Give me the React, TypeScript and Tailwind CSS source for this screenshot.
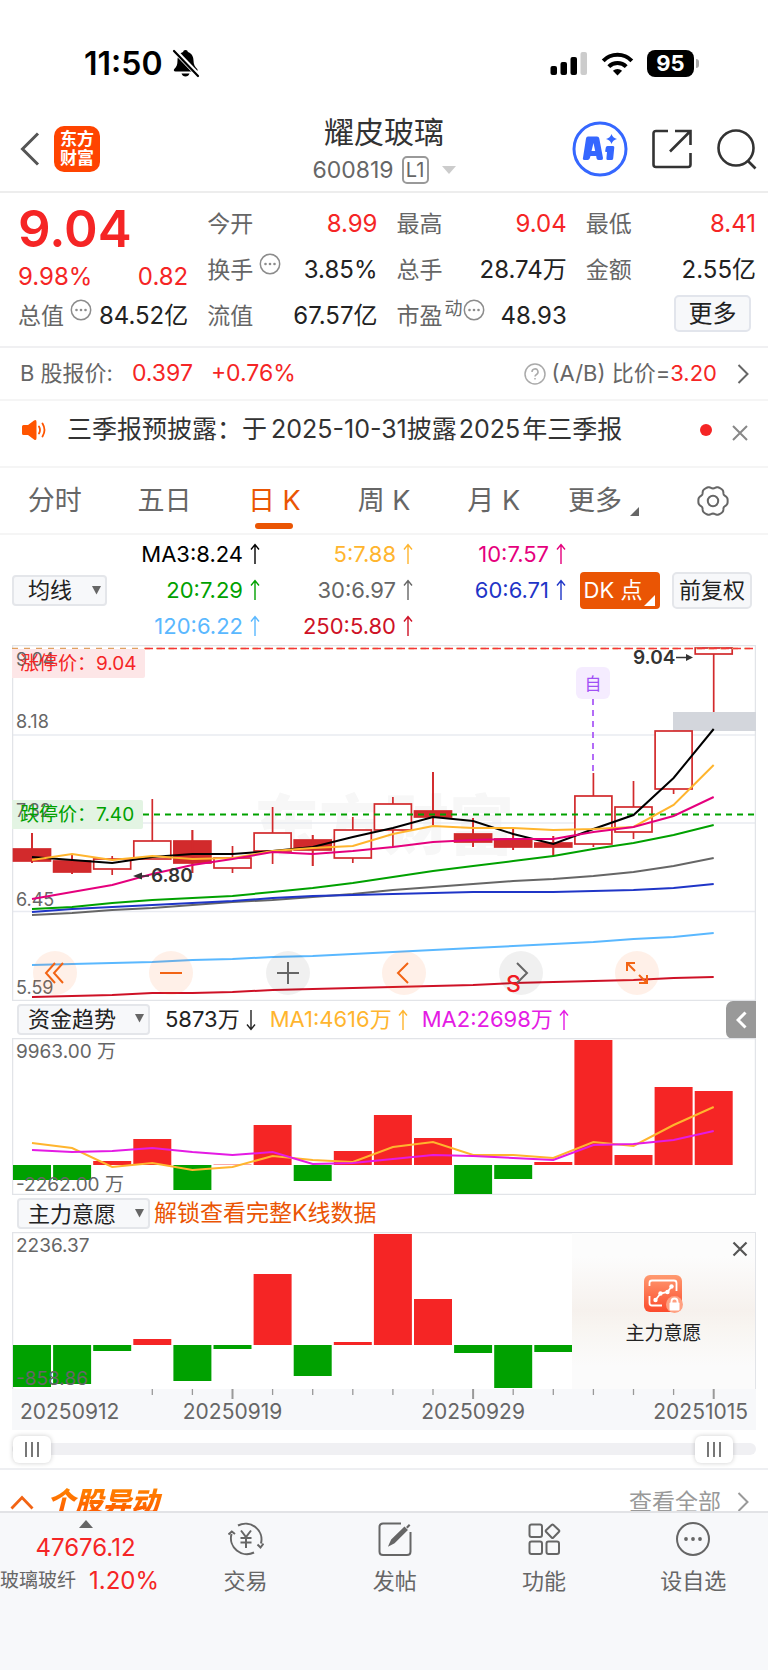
import { useState } from 'react';
import type { ReactNode } from 'react';

const STEP = 40.1;
const cx = (i: number) => 20 + i * STEP;

// high, body top, body bottom, low, filled
const candles: [number, number, number, number, boolean][] = [
  [188, 204, 216, 218, true],
  [210, 216, 227, 229, true],
  [211, 214, 224, 230, false],
  [154, 196, 214, 214, false],
  [185, 196, 218, 228, true],
  [201, 213, 223, 228, false],
  [162, 188, 206, 219, false],
  [190, 195, 205, 221, true],
  [172, 185, 213, 218, false],
  [152, 159, 185, 202, false],
  [127, 166, 172, 180, true],
  [173, 189, 197, 202, true],
  [183, 194, 202, 205, true],
  [191, 198, 202, 211, true],
  [128, 151, 199, 202, false],
  [136, 162, 187, 194, false],
  [86, 86, 144, 149, false],
  [3, 3, 9, 67, false],
];

const maLines = [
  { color: '#ce1126', ys: [352, 351, 350, 348, 348, 347, 345, 344, 343, 342, 341, 340, 338, 337, 336, 335, 333, 332] },
  { color: '#5ab8ff', ys: [320, 319, 318, 317, 315, 314, 312, 311, 309, 307, 305, 303, 301, 299, 297, 294, 292, 288] },
  { color: '#666666', ys: [270, 268, 265, 263, 260, 257, 255, 252, 249, 245, 242, 239, 236, 234, 231, 227, 221, 213] },
  { color: '#1f35c7', ys: [267, 264, 262, 260, 258, 256, 253, 251, 250, 249, 248, 247, 247, 247, 246, 245, 243, 239] },
  { color: '#00a100', ys: [264, 262, 258, 255, 253, 251, 247, 243, 238, 232, 226, 221, 216, 211, 204, 198, 190, 180] },
  { color: '#000000', ys: [212, 215, 218, 212, 209, 209, 206, 202, 192, 183, 172, 176, 189, 199, 184, 170, 133, 84] },
  { color: '#ffb52e', ys: [215, 209, 215, 211, 214, 213, 206, 203, 201, 189, 181, 183, 183, 185, 184, 182, 160, 120] },
  { color: '#e5007d', ys: [254, 247, 240, 229, 220, 214, 207, 209, 206, 202, 197, 195, 194, 194, 187, 182, 171, 152] },
];

const fundBars = [-15, -15, 4, 26, -25, 1, 40, -16, 14, 50, 27, -29, -14, 3, 125, 10, 78, 74];
const fundMa1 = [105, 110, 129, 125, 132, 129, 118, 122, 124, 109, 104, 117, 117, 120, 104, 108, 87, 69];
const fundMa2 = [112, 114, 113, 110, 114, 117, 114, 126, 125, 121, 117, 118, 120, 122, 107, 106, 102, 93];
const willBars = [-42, -39, -6, 6, -36, -4, 71, -31, 3, 111, 46, -8, -43, -7];

const maValues = [
  { label: 'MA3:8.24', cls: 'text-black' },
  { label: '5:7.88', cls: 'text-[#ffb52e]' },
  { label: '10:7.57', cls: 'text-[#e5007d]' },
  { label: '20:7.29', cls: 'text-[#00a100]' },
  { label: '30:6.97', cls: 'text-[#666]' },
  { label: '60:6.71', cls: 'text-[#1f35c7]' },
  { label: '120:6.22', cls: 'text-[#5ab8ff]' },
  { label: '250:5.80', cls: 'text-[#ce1126]' },
];

const toPoints = (ys: number[]) => ys.map((y, i) => `${cx(i)},${y}`).join(' ');

const gearPath =
  'M' +
  Array.from({ length: 72 }, (_, i) => {
    const a = (i * 5 * Math.PI) / 180;
    const r = 13.9 + 1.1 * Math.cos(6 * a) - 0.35 * Math.cos(12 * a);
    return `${(17 + r * Math.cos(a)).toFixed(2)} ${(17 + r * Math.sin(a)).toFixed(2)}`;
  }).join('L') +
  'Z';

function Arrow({ down = false }: { down?: boolean }) {
  return (
    <svg width="10" height="22" viewBox="0 0 10 22" fill="none" stroke="currentColor" strokeWidth="1.4" className={down ? 'rotate-180' : ''}>
      <path d="M5 21V2M1 6.5L5 1.5L9 6.5" />
    </svg>
  );
}

function Chevron({ className }: { className: string }) {
  return (
    <svg viewBox="0 0 12 20" fill="none" stroke="currentColor" strokeWidth="2" className={className}>
      <path d="M1.5 1L10.5 10L1.5 19" />
    </svg>
  );
}

function InfoDots() {
  return (
    <svg width="22" height="22" viewBox="0 0 22 22" className="mb-3 shrink-0" fill="#8c8c8c">
      <circle cx="11" cy="11" r="9.7" fill="none" stroke="#8c8c8c" strokeWidth="1.5" />
      <circle cx="6.5" cy="11" r="1.3" />
      <circle cx="11" cy="11" r="1.3" />
      <circle cx="15.5" cy="11" r="1.3" />
    </svg>
  );
}

function Picker({ label, options, className }: { label: string; options: string[]; className: string }) {
  return (
    <div className={`relative shrink-0 ${className}`}>
      <select
        aria-label={label}
        className="h-[31px] w-full appearance-none rounded-[4px] border-2 border-[#e4e6ea] bg-[#f7f8fa] text-[22px] leading-[26px] text-[#222] outline-none"
      >
        {options.map((o) => (
          <option key={o}>{o}</option>
        ))}
      </select>
      <svg width="9" height="9" viewBox="0 0 9 9" className="pointer-events-none absolute right-[6px] top-[11px]">
        <path d="M0 0H9L4.5 8.5Z" fill="#666" />
      </svg>
    </div>
  );
}

function Cell({ name, extra, value, red = false }: { name: string; extra?: ReactNode; value: string; red?: boolean }) {
  return (
    <div className="flex h-[46px] items-center justify-between whitespace-nowrap text-[24px]">
      <span className="flex items-center text-[23px] text-[#666]">
        {name}
        {extra}
      </span>
      <span className={red ? 'text-[#f52525]' : 'text-[#222]'}>{value}</span>
    </div>
  );
}

function StatusBar() {
  return (
    <div className="flex h-[105px] items-start justify-between pl-[84px] pr-[69px] pt-[45px]">
      <div className="flex h-[37px] items-center gap-[9px] text-[32px] font-semibold text-black">
        11:50
        <svg width="28" height="29" viewBox="0 0 28 29">
          <path d="M13.5 1c-1.400 0-2.200.9-2.400 2.100C7.600 4.300 5.500 7.200 5.500 11.500c0 4.200-1 6.500-3 8.300-1.300 1.200-.7 2.700 1 2.700h20.500c1.600 0 2.200-1.500 1-2.700-2-1.800-3.500-4.100-3.500-8.300 0-4.300-2.200-7.200-5.600-8.400-.2-1.200-1-2.100-2.400-2.100z" />
          <path d="M9.500 24.500h8c-.6 2-2.100 3-4 3s-3.400-1-4-3z" />
          <path d="M2 1L27 27" stroke="#fff" strokeWidth="5" />
          <path d="M2 2L26 27" stroke="#000" strokeWidth="2.200" strokeLinecap="round" />
        </svg>
      </div>
      <div className="flex h-[37px] items-center gap-[13px]">
        <svg width="38" height="25" viewBox="0 0 38 25">
          <rect x="0.500" y="15" width="6.500" height="9" rx="2" />
          <rect x="10.500" y="11" width="6.500" height="13" rx="2" />
          <rect x="20.500" y="6" width="6.500" height="18" rx="2" />
          <rect x="30.500" y="1" width="6.500" height="23" rx="2" fill="#ccc" />
        </svg>
        <svg width="33" height="24" viewBox="0 0 33 24" fill="none" stroke="#000" strokeWidth="4">
          <path d="M2.200 8.800a20 20 0 0 1 28.600 0" />
          <path d="M7.800 14.600a12.300 12.300 0 0 1 17.400 0" />
          <path d="M16.500 23.500l-4.600-4.700a6.500 6.500 0 0 1 9.200 0z" fill="#000" stroke="none" />
        </svg>
        <div className="flex items-center gap-[2px]">
          <span className="flex h-[27px] w-[47px] items-center justify-center rounded-[8px] bg-black text-[22px] font-bold text-white">95</span>
          <span className="h-[9px] w-[3px] rounded-r-full bg-[#aaa]"></span>
        </div>
      </div>
    </div>
  );
}

function Header() {
  return (
    <header className="flex h-[88px] items-center border-b-2 border-[#ededed] pl-[20px] pr-[10px]">
      <div className="flex flex-1 items-center gap-[14px] pt-[2px]">
        <button aria-label="返回" className="text-[#555]">
          <svg width="20" height="34" viewBox="0 0 20 34" fill="none" stroke="currentColor" strokeWidth="3">
            <path d="M18 1.500L2.500 17L18 32.500" />
          </svg>
        </button>
        <div className="flex h-[46px] w-[46px] flex-col items-center justify-center rounded-[10px] bg-[#ff4400] text-[17px] font-bold leading-[19px] text-white">
          <span>东方</span>
          <span>财富</span>
        </div>
      </div>
      <div className="mr-[10px] flex flex-col items-center">
        <h1 className="text-[30px] leading-[40px] text-[#333]">耀皮玻璃</h1>
        <button className="mt-[3px] flex items-center gap-2 text-[23px] leading-[30px] text-[#666]">
          600819
          <span className="flex h-[28px] w-[27px] items-center justify-center rounded-[5px] border-2 border-[#999] text-[20px] leading-none">L1</span>
          <svg width="14" height="8" viewBox="0 0 14 8" className="ml-[5px]">
            <path d="M0 0H14L7 8Z" fill="#ccc" />
          </svg>
        </button>
      </div>
      <div className="flex flex-1 items-center justify-end gap-[24px] pt-[2px]">
        <button aria-label="Ai">
          <svg width="56" height="56" viewBox="0 0 56 56">
            <circle cx="28" cy="28" r="26" fill="#fff" stroke="#3567ff" strokeWidth="3" />
            <path
              d="M16 15.500H25Q27 15.500 27.300 17.500L31 37Q31.300 39 29.300 39H26.500Q24.800 39 24.500 37.300L24.200 35H18.500L17.800 37.300Q17.300 39 15.500 39H12.500Q10.300 39 11 36.800L14 17.500Q14.300 15.500 16 15.500ZM21.500 22L19.500 30H23.200Z"
              fill="#3567ff"
              fillRule="evenodd"
            />
            <path d="M35.500 25H41Q42.500 25 42.300 26.500L41.200 37.500Q41 39 39.500 39H35.800Q34.300 39 34.400 37.500L35 31H34Q33 31 33.200 30L33.800 26.500Q34 25 35.500 25Z" fill="#3567ff" />
            <path d="M39.500 13Q40.700 17 45 18Q40.700 19 39.500 23Q38.300 19 34 18Q38.300 17 39.500 13Z" fill="#3567ff" />
          </svg>
        </button>
        <button aria-label="分享">
          <svg width="40" height="40" viewBox="0 0 40 40" fill="none" stroke="#333" strokeWidth="2.600">
            <path d="M16 2H4Q1.500 2 1.500 4.500V35.500Q1.500 38 4 38H36Q38.500 38 38.500 35.500V24" />
            <path d="M23 2H38.500V16M38 2.500L18 22.500" />
          </svg>
        </button>
        <button aria-label="搜索">
          <svg width="42" height="42" viewBox="0 0 42 42" fill="none" stroke="#333" strokeWidth="2.600">
            <circle cx="20" cy="20" r="17.500" />
            <path d="M31.500 32.500L39.500 40.500" />
          </svg>
        </button>
      </div>
    </header>
  );
}

function Quote() {
  return (
    <section className="grid grid-cols-4 gap-x-[19px] border-b-2 border-[#f0f0f2] pb-[7px] pl-[18px] pr-[12px] pt-2">
      <div className="text-[#f52525]">
        <div className="flex h-[55px] items-center text-[51px] font-semibold leading-none">9.04</div>
        <div className="flex h-[37px] items-center justify-between pt-[4px] text-[24px]">
          <span>9.98%</span>
          <span>0.82</span>
        </div>
        <Cell name="总值" extra={<span className="ml-[6px]"><InfoDots /></span>} value="84.52亿" />
      </div>
      <div>
        <Cell name="今开" value="8.99" red />
        <Cell name="换手" extra={<span className="ml-[6px]"><InfoDots /></span>} value="3.85%" />
        <Cell name="流值" value="67.57亿" />
      </div>
      <div>
        <Cell name="最高" value="9.04" red />
        <Cell name="总手" value="28.74万" />
        <Cell
          name="市盈"
          extra={
            <>
              <span className="mb-4 ml-[2px] text-[18px]">动</span>
              <span><InfoDots /></span>
            </>
          }
          value="48.93"
        />
      </div>
      <div>
        <Cell name="最低" value="8.41" red />
        <Cell name="金额" value="2.55亿" />
        <div className="flex justify-end pr-[5px] pt-[2px]">
          <button className="h-[37px] w-[77px] rounded-[5px] border-2 border-[#e2e5ec] bg-[#f7f8fa] text-[24px] leading-none text-[#222]">更多</button>
        </div>
      </div>
    </section>
  );
}

function Notices() {
  return (
    <>
      <div className="flex h-[53px] items-center border-b-2 border-[#f5f5f5] pl-[20px] pr-[19px] text-[22px] text-[#666]">
        <span>B 股报价:</span>
        <span className="ml-[19px] text-[23px] text-[#f52525]">0.397</span>
        <span className="ml-[18px] text-[23px] text-[#f52525]">+0.76%</span>
        <a href="#ratio" className="ml-auto flex items-center">
          <svg width="22" height="22" viewBox="0 0 22 22" fill="none" stroke="#aaa" strokeWidth="1.500" className="mr-[6px]">
            <circle cx="11" cy="11" r="10" />
            <path d="M8 9a3 3 0 1 1 4.500 2.500Q11 12.300 11 13.500M11 15v1.600" />
          </svg>
          (A/B) 比价=<span className="text-[#f52525]">3.20</span>
          <Chevron className="ml-5 h-[20px] w-[12px]" />
        </a>
      </div>
      <div className="flex h-[67px] items-center border-b-2 border-[#f5f5f5] pb-[8px] pl-[21px] pr-[20px]">
        <svg width="26" height="22" viewBox="0 0 26 22">
          <path d="M2.500 6H7L13 1.500Q15.500 0 15.500 3V19Q15.500 22 13 20.500L7 16H2.500Q1 16 1 14.500V7.500Q1 6 2.500 6Z" fill="#ff5500" />
          <path d="M18 7.500Q20 11 18 14.500M21.500 4.500Q25.500 11 21.500 17.500" fill="none" stroke="#ff5500" strokeWidth="1.800" strokeLinecap="round" />
        </svg>
        <a href="#notice" className="ml-[20px] whitespace-nowrap text-[25px] text-[#333]">
          三季报预披露：于<span className="ml-1">2025-10-31</span>披露<span className="mx-[2px]">2025</span>年三季报
        </a>
        <span className="ml-auto h-[12px] w-[12px] rounded-full bg-[#f52525]"></span>
        <button aria-label="关闭" className="ml-5 mt-[6px] text-[#888]">
          <svg width="16" height="16" viewBox="0 0 16 16" fill="none" stroke="currentColor" strokeWidth="2">
            <path d="M1 1L15 15M15 1L1 15" />
          </svg>
        </button>
      </div>
    </>
  );
}

function Tabs() {
  const [active, setActive] = useState('日 K');
  return (
    <nav className="grid h-[67px] grid-cols-7 border-b-2 border-[#f5f5f5] text-[27px]">
      {['分时', '五日', '日 K', '周 K', '月 K', '更多'].map((t) => (
        <button
          key={t}
          onClick={() => setActive(t)}
          className={`flex flex-col items-center pt-[14px] ${active === t ? 'text-[#ea5504]' : 'text-[#666]'}`}
        >
          <span className="flex items-end gap-2 whitespace-nowrap leading-[38px]">
            {t}
            {t === '更多' && (
              <svg width="9" height="9" viewBox="0 0 9 9" className="mb-1">
                <path d="M9 0V9H0Z" fill="#666" />
              </svg>
            )}
          </span>
          {active === t && <span className="mt-[3px] h-[6px] w-[38px] rounded-[3px] bg-[#ea5504]"></span>}
        </button>
      ))}
      <button aria-label="设置" className="flex justify-center pt-[16px]">
        <svg width="34" height="34" viewBox="0 0 34 34" fill="none" stroke="#666" strokeWidth="2">
          <path d={gearPath} />
          <circle cx="17" cy="17" r="5.200" />
        </svg>
      </button>
    </nav>
  );
}

function MaRow() {
  return (
    <div className="flex h-[110px] items-center pl-[12px] pr-[16px]">
      <Picker label="指标" options={['均线', 'BOLL']} className="w-[95px] [&>select]:pl-[14px]" />
      <div className="grid flex-1 grid-cols-3">
        {maValues.map((m) => (
          <span key={m.label} className={`flex h-[36px] items-center justify-end gap-[7px] whitespace-nowrap text-[22px] ${m.cls}`}>
            {m.label}
            <Arrow />
          </span>
        ))}
      </div>
      <button className="relative ml-[14px] h-[37px] w-[80px] whitespace-nowrap rounded-[4px] bg-[#ea5504] pr-[14px] text-[22px] leading-none text-white">
        DK 点
        <svg width="11" height="11" viewBox="0 0 11 11" className="absolute bottom-[3px] right-[5px]">
          <path d="M11 0V11H0Z" fill="#fff" />
        </svg>
      </button>
      <button className="ml-[12px] h-[37px] w-[80px] whitespace-nowrap rounded-[5px] border-2 border-[#e4e6ea] bg-[#f7f8fa] text-[22px] leading-none text-[#222]">前复权</button>
    </div>
  );
}

function ControlButton({ label, gray = false, children }: { label: string; gray?: boolean; children: ReactNode }) {
  return (
    <button
      aria-label={label}
      className={`flex h-[44px] w-[44px] items-center justify-center rounded-full ${gray ? 'bg-black/6 text-[#666]' : 'bg-[#ff6a1f]/10 text-[#f26414]'}`}
    >
      <svg width="24" height="24" viewBox="0 0 24 24" fill="none" stroke="currentColor" strokeWidth="2">
        {children}
      </svg>
    </button>
  );
}

function KLine() {
  return (
    <div className="relative mx-[12px]">
      <svg viewBox="0 0 744 356" className="block w-full" fontSize="18">
        <text x="372" y="204" textAnchor="middle" fontSize="65" fontWeight="900" fill="#f7f7f7">东方财富</text>
        <path d="M0 90H744M0 178H744M0 266.500H744" stroke="#e9ebf1" strokeWidth="1.500" />
        <rect x="0.500" y="0.500" width="743" height="355" fill="none" stroke="#e2e4e8" strokeWidth="1.500" />
        <rect x="661" y="67" width="83" height="19" fill="#d3d6dc" />
        {candles.map(([h, t, b, l, filled], i) => (
          <g key={i} stroke="#d22a2c" strokeWidth="1.700">
            <path d={`M${cx(i)} ${h}V${t}M${cx(i)} ${b}V${l}`} />
            <rect x={cx(i) - 18.5} y={t} width="37" height={b - t} fill={filled ? '#d22a2c' : '#fff'} />
            {filled && <path d={`M${cx(i)} ${h}V${l}`} />}
          </g>
        ))}
        <path d="M0 3.500H744" stroke="#e0a060" strokeWidth="1.300" strokeDasharray="6 6" />
        <path d="M133 3.500H744" stroke="#f53535" strokeWidth="1.300" strokeDasharray="8 4" />
        <path d="M131 169.500H744" stroke="#00a100" strokeWidth="1.800" strokeDasharray="6 5" />
        <path d="M0 4H133V31Q133 33 131 33H0Z" fill="#fde6e7" />
        <path d="M0 155H129Q131 155 131 157V182Q131 184 129 184H0Z" fill="#e3f4e3" />
        <g fill="#666">
          <text x="4" y="21">9.04</text>
          <text x="4" y="83">8.18</text>
          <text x="4" y="172">7.32</text>
          <text x="4" y="261">6.45</text>
          <text x="4" y="349">5.59</text>
        </g>
        <text x="8" y="25" fontSize="19" fill="#f52525">涨停价：9.04</text>
        <text x="8" y="176" fontSize="19" fill="#00a100">跌停价：7.40</text>
        {maLines.map((l) => (
          <polyline key={l.color} points={toPoints(l.ys)} fill="none" stroke={l.color} strokeWidth="2" />
        ))}
        <g fill="#333">
          <text x="139" y="237" fontSize="19" fontWeight="600">6.80</text>
          <path d="M121 231L130 227.500V234.500Z" />
          <path d="M128 231H137" stroke="#333" strokeWidth="1.500" />
          <text x="621" y="19" fontSize="19" fontWeight="600">9.04</text>
          <path d="M681 12.500L674 9V16Z" />
          <path d="M664 12.500H676" stroke="#333" strokeWidth="1.500" />
        </g>
        <rect x="564" y="22" width="34" height="32" rx="6" fill="#f5ecff" />
        <text x="581" y="45" textAnchor="middle" fontSize="17" fill="#a050f5">自</text>
        <path d="M581 54V128" stroke="#ab5cf7" strokeWidth="1.800" strokeDasharray="6 5" />
      </svg>
      <div className="absolute bottom-[6px] left-[2.800%] flex w-[84.200%] justify-between">
        <ControlButton label="最早"><path d="M12 2L3 12L12 22M20 2L11 12L20 22" /></ControlButton>
        <ControlButton label="缩小"><path d="M1 12H23" /></ControlButton>
        <ControlButton label="放大" gray><path d="M1 12H23M12 1V23" /></ControlButton>
        <ControlButton label="向左"><path d="M16 2L6 12L16 22" /></ControlButton>
        <ControlButton label="向右" gray><path d="M8 2L18 12L8 22" /></ControlButton>
        <ControlButton label="全屏"><path d="M10 10L2 2M2 10V2H10M14 14L22 22M22 14V22H14" /></ControlButton>
      </div>
      <span className="absolute bottom-[5px] left-[66.400%] text-[23px] font-medium leading-[23px] text-[#f01a22]">S</span>
    </div>
  );
}

function Bars({ data, zero }: { data: number[]; zero: number }) {
  return (
    <>
      {data.map((v, i) => (
        <rect key={i} x={cx(i) - 19} y={v > 0 ? zero - v : zero} width="38" height={Math.abs(v)} fill={v > 0 ? '#f52525' : '#00a100'} opacity={v === 1 ? 0.4 : 1} />
      ))}
    </>
  );
}

function FundTrend() {
  return (
    <section className="mx-[12px]">
      <div className="flex h-[37px] items-center pl-[5px] text-[22px]">
        <Picker label="副图一" options={['资金趋势', '成交量']} className="w-[133px] [&>select]:pl-[9px]" />
        <span className="ml-[15px] flex items-center gap-[6px] text-[#222]">5873万<Arrow down /></span>
        <span className="ml-[14px] flex items-center gap-[6px] text-[#ffb52e]">MA1:4616万<Arrow /></span>
        <span className="ml-[14px] flex items-center gap-[6px] text-[#e41be4]">MA2:2698万<Arrow /></span>
        <button aria-label="展开" className="ml-auto flex h-[38px] w-[30px] items-center justify-center rounded-l-[7px] bg-[#999] text-white">
          <svg width="11" height="18" viewBox="0 0 11 18" fill="none" stroke="currentColor" strokeWidth="3">
            <path d="M9.500 1.500L2 9L9.500 16.500" />
          </svg>
        </button>
      </div>
      <svg viewBox="0 0 744 157" className="block w-full" fontSize="19">
        <rect x="0.500" y="0.500" width="743" height="156" fill="none" stroke="#e2e4e8" strokeWidth="1.500" />
        <Bars data={fundBars} zero={127} />
        <text x="4" y="20" fill="#666">9963.00 万</text>
        <text x="4" y="153" fill="#666">-2262.00 万</text>
        <polyline points={toPoints(fundMa1)} fill="none" stroke="#ffb52e" strokeWidth="2" />
        <polyline points={toPoints(fundMa2)} fill="none" stroke="#e41be4" strokeWidth="2" />
      </svg>
    </section>
  );
}

function MainWill() {
  return (
    <section className="mx-[12px]">
      <div className="flex h-[37px] items-center gap-1 pl-[5px]">
        <Picker label="副图二" options={['主力意愿', 'MACD']} className="w-[133px] [&>select]:pl-[9px]" />
        <a href="#unlock" className="text-[23px] text-[#ea5504]">解锁查看完整K线数据</a>
      </div>
      <div className="relative">
        <svg viewBox="0 0 744 157" className="block w-full" fontSize="19">
          <path d="M0.500 157V0.500H743.500V157" fill="none" stroke="#e2e4e8" strokeWidth="1.500" />
          <Bars data={willBars} zero={113} />
          <text x="4" y="20" fill="#666">2236.37</text>
          <text x="4" y="153" fill="#666">-858.86</text>
        </svg>
        <div className="absolute bottom-0 right-px top-px flex w-[24.600%] flex-col items-center bg-[linear-gradient(180deg,#fcfcfc_15%,#f6f1ed_50%,#f8f5f1_60%,#fbfbfb_85%)] pt-[41px]">
          <svg width="42" height="40" viewBox="0 0 42 40">
            <defs>
              <linearGradient id="lockCard" x1="0" y1="0" x2="0" y2="1">
                <stop offset="0" stopColor="#ff9a70" />
                <stop offset="1" stopColor="#fb4a2c" />
              </linearGradient>
            </defs>
            <rect x="2" y="1" width="38" height="37" rx="6" fill="url(#lockCard)" />
            <g fill="none" stroke="#fff" strokeWidth="1.800">
              <path d="M7.500 12V9Q7.500 6.500 10 6.500H32Q34.500 6.500 34.500 9V17M7.500 22V29Q7.500 31.500 10 31.500H20" />
              <path d="M13.500 26L18.500 19.500L25.500 18L29.500 12.500" />
            </g>
            <g fill="#fff">
              <circle cx="13.500" cy="26" r="2.200" />
              <circle cx="18.500" cy="19.500" r="2.200" />
              <circle cx="25.500" cy="18" r="2.200" />
              <circle cx="29.500" cy="12.500" r="2.200" />
            </g>
            <circle cx="32.500" cy="30.500" r="8.500" fill="#ffa081" />
            <rect x="27.500" y="28.500" width="10" height="8" rx="1" fill="#fff" />
            <path d="M29.500 29V27.500a3 3 0 0 1 6 0V29" fill="none" stroke="#fff" strokeWidth="1.800" />
          </svg>
          <span className="mt-[7px] text-[19px] leading-[26px] text-[#222]">主力意愿</span>
          <button aria-label="关闭主力意愿" className="absolute right-[7px] top-[8px] text-[#555]">
            <svg width="16" height="16" viewBox="0 0 16 16" fill="none" stroke="currentColor" strokeWidth="2.200">
              <path d="M1.500 1.500L14.500 14.500M14.500 1.500L1.500 14.500" />
            </svg>
          </button>
        </div>
      </div>
      <svg viewBox="0 0 744 41" className="block w-full bg-[#f7f8fa]" fontSize="21" fill="#666">
        {Array.from({ length: 15 }, (_, k) => k + 3).map((i) => (
          <path key={i} d={`M${cx(i)} 0V${i % 6 === 5 ? 10 : 6}`} stroke="#999" strokeWidth={i % 6 === 5 ? 2 : 1.3} />
        ))}
        <text x="8" y="30">20250912</text>
        <text x={cx(5)} y="30" textAnchor="middle">20250919</text>
        <text x={cx(11)} y="30" textAnchor="middle">20250929</text>
        <text x="736" y="30" textAnchor="end">20251015</text>
      </svg>
    </section>
  );
}

const thumbCls =
  'pointer-events-none absolute inset-0 h-full w-full appearance-none bg-transparent [&::-webkit-slider-thumb]:pointer-events-auto [&::-webkit-slider-thumb]:h-[27px] [&::-webkit-slider-thumb]:w-[38px] [&::-webkit-slider-thumb]:appearance-none [&::-webkit-slider-thumb]:rounded-[6px] [&::-webkit-slider-thumb]:bg-white [&::-webkit-slider-thumb]:bg-[linear-gradient(90deg,#777_0_2px,transparent_2px_6px,#777_6px_8px,transparent_8px_12px,#777_12px_14px)] [&::-webkit-slider-thumb]:bg-[length:14px_15px] [&::-webkit-slider-thumb]:bg-center [&::-webkit-slider-thumb]:bg-no-repeat [&::-webkit-slider-thumb]:shadow-[0_0_5px_rgba(0,0,0,0.2)]';

function RangeSlider() {
  return (
    <div className="border-b-2 border-[#eeeff2] px-[12px]">
      <div className="relative flex h-[38px] items-center">
        <div className="h-[12px] w-full rounded-full bg-[#f0f0f3]"></div>
        <input type="range" aria-label="开始日期" min={0} max={1000} defaultValue={1} className={thumbCls} />
        <input type="range" aria-label="结束日期" min={0} max={1000} defaultValue={967} className={thumbCls} />
      </div>
    </div>
  );
}

function BottomNav() {
  const icons: { label: string; icon: ReactNode }[] = [
    {
      label: '交易',
      icon: (
        <>
          <path d="M10 4.500A16 16 0 0 1 33 22.500M26 31.500A16 16 0 0 1 3.500 13" />
          <path d="M0.500 13.500L3.800 10.500L7 13M29.500 23.500L32.500 26.500L35.500 22.500" />
          <path d="M13 9.500L18 16L23 9.500M18 16V27M12.500 17H23.500M12.500 21.500H23.500" />
        </>
      ),
    },
    {
      label: '发帖',
      icon: (
        <>
          <path d="M24 2.500H6Q2.500 2.500 2.500 6V30.500Q2.500 34 6 34H30Q33.500 34 33.500 30.500V11" />
          <path d="M13 23.500L15 19L27.500 7L29.500 9L17 21.500Z" fill="#666" />
          <path d="M30.500 4.500L32 6" strokeWidth="4" />
        </>
      ),
    },
    {
      label: '功能',
      icon: (
        <>
          <rect x="3.500" y="3.500" width="12.500" height="12.500" rx="2" />
          <rect x="3.500" y="20.500" width="12.500" height="12.500" rx="2" />
          <rect x="20.500" y="20.500" width="12.500" height="12.500" rx="2" />
          <path d="M25.800 3.800Q26.500 3 27.200 3.800L33 9.300Q33.700 10 33 10.700L27.200 16.700Q26.500 17.300 25.800 16.700L20 10.700Q19.300 10 20 9.300Z" />
        </>
      ),
    },
    {
      label: '设自选',
      icon: (
        <>
          <circle cx="18" cy="18" r="16" />
          <g fill="#666" stroke="none">
            <circle cx="11" cy="18" r="1.900" />
            <circle cx="18" cy="18" r="1.900" />
            <circle cx="25" cy="18" r="1.900" />
          </g>
        </>
      ),
    },
  ];

  return (
    <nav className="flex flex-1 items-start border-t-2 border-[#e2e3e6] bg-[#f7f8fa]">
      <button className="flex w-[171px] flex-col items-center pt-[7px] text-[#f52525]">
        <svg width="14" height="8" viewBox="0 0 14 8">
          <path d="M7 0L14 8H0Z" fill="#666" />
        </svg>
        <span className="mt-1 text-[24px] leading-[32px]">47676.12</span>
        <span className="flex w-full items-center whitespace-nowrap text-[24px] leading-[34px]">
          <span className="text-[19px] text-[#666]">玻璃玻纤</span>
          <span className="ml-[13px]">1.20%</span>
        </span>
      </button>
      {icons.map((n) => (
        <button key={n.label} className="flex flex-1 flex-col items-center pt-2 text-[22px] leading-[32px] text-[#666]">
          <svg width="36" height="36" viewBox="0 0 36 36" fill="none" stroke="#666" strokeWidth="2">
            {n.icon}
          </svg>
          <span className="mt-2">{n.label}</span>
        </button>
      ))}
    </nav>
  );
}

export default function App() {
  return (
    <div className="flex min-h-screen flex-col bg-white font-['Inter','Noto_Sans_CJK_SC',sans-serif]">
      <StatusBar />
      <Header />
      <Quote />
      <Notices />
      <Tabs />
      <MaRow />
      <KLine />
      <FundTrend />
      <MainWill />
      <RangeSlider />
      <section className="flex h-[41px] items-start overflow-hidden pl-[10px] pr-[19px] pt-[13px]">
        <svg width="24" height="15" viewBox="0 0 24 15" fill="none" stroke="#f26414" strokeWidth="2.800" className="mt-[12px]">
          <path d="M1.500 13.500L12 2.500L22.500 13.500" />
        </svg>
        <h2 className="ml-[13px] bg-gradient-to-b from-[#ff8a00] to-[#ff4a00] bg-clip-text pr-1 text-[28px] font-black italic leading-[38px] text-transparent">个股异动</h2>
        <a href="#all" className="ml-auto flex items-center text-[23px] leading-[38px] text-[#999]">
          查看全部
          <Chevron className="ml-4 h-[20px] w-[12px]" />
        </a>
      </section>
      <BottomNav />
    </div>
  );
}
